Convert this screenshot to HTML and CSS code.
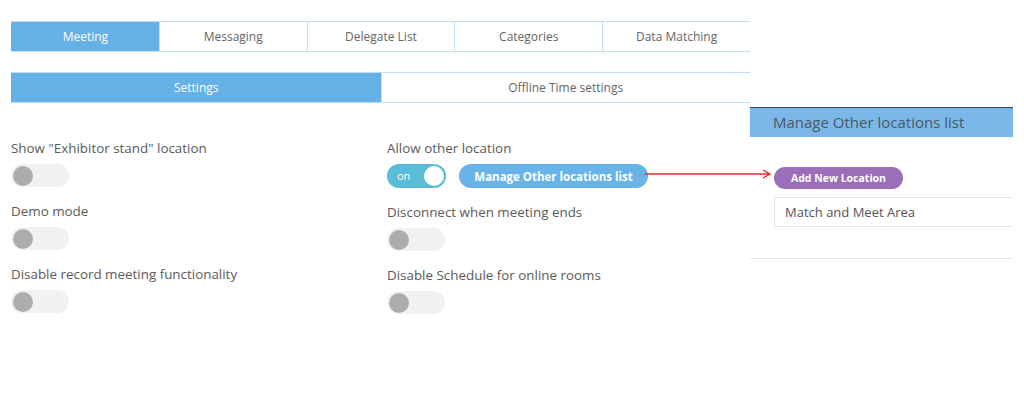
FILE: index.html
```html
<!DOCTYPE html>
<html lang="en">
<head>
  <meta charset="UTF-8" />
  <title>Meeting settings</title>
  <link rel="stylesheet" href="styles.css">
</head>
<body>
  <div class="page">
    <div class="main">
      <div class="tabs">
        <div class="tab active">Meeting</div>
        <div class="tab">Messaging</div>
        <div class="tab">Delegate List</div>
        <div class="tab">Categories</div>
        <div class="tab">Data Matching</div>
      </div>
      <div class="tabs subtabs">
        <div class="tab active">Settings</div>
        <div class="tab">Offline Time settings</div>
      </div>

      <div class="settings">
        <div class="col">
          <div class="item">
            <div class="label">Show "Exhibitor stand" location</div>
            <div class="switch"><span class="knob"></span></div>
          </div>
          <div class="item">
            <div class="label">Demo mode</div>
            <div class="switch"><span class="knob"></span></div>
          </div>
          <div class="item">
            <div class="label">Disable record meeting functionality</div>
            <div class="switch"><span class="knob"></span></div>
          </div>
        </div>
        <div class="col">
          <div class="item">
            <div class="label">Allow other location</div>
            <div class="row">
              <div class="switch on"><span class="txt">on</span><span class="knob"></span></div>
              <button class="btn-manage">Manage Other locations list</button>
            </div>
          </div>
          <div class="item">
            <div class="label">Disconnect when meeting ends</div>
            <div class="switch"><span class="knob"></span></div>
          </div>
          <div class="item">
            <div class="label">Disable Schedule for online rooms</div>
            <div class="switch"><span class="knob"></span></div>
          </div>
        </div>
      </div>
    </div>

    <div class="panel">
      <div class="panel-head">Manage Other locations list</div>
      <div class="panel-body">
        <button class="btn-add">Add New Location</button>
        <div class="loc-input">Match and Meet Area</div>
      </div>
    </div>

    <svg class="arrow" width="128" height="12" viewBox="0 0 128 12">
      <line x1="0" y1="6" x2="124" y2="6" stroke="#e8272b" stroke-width="1.3" />
      <path d="M118 2 L125 6 L118 10" fill="none" stroke="#e8272b" stroke-width="1.4" />
    </svg>
  </div>
</body>
</html>
```

FILE: styles.css
```css
body { margin: 0; background: #fff; font-family: "Open Sans", Arial, sans-serif; color: #555; }
.page { position: relative; display: flex; align-items: flex-start; height: 397px; }
.main { width: 739px; flex-shrink: 0; padding: 21px 0 0 11px; }

.tabs { display: flex; border-top: 1px solid #c7ddf3; border-bottom: 1px solid #c7ddf3; }
.tab {
  flex: 1;
  height: 29px;
  line-height: 29px;
  text-align: center;
  font-size: 12px;
  color: #666;
  border-left: 1px solid #c7ddf3;
}
.tab:first-child { border-left: 1px solid #66b0e8; }
.tab.active { background: #66b0e8; color: #fff; }
.subtabs { margin-top: 20px; }

.settings { display: flex; margin-top: 36px; }
.col { width: 376px; flex-shrink: 0; }
.col + .col { width: 363px; }
.item { margin-bottom: 15px; }
.label { font-size: 13.4px; line-height: 18px; margin-bottom: 7px; color: #5a5a5a; }
.row { display: flex; align-items: center; gap: 13px; }

.switch {
  position: relative;
  width: 58px;
  height: 23px;
  border-radius: 12px;
  background: #f1f1f1;
}
.switch .knob {
  position: absolute;
  left: 2px;
  top: 1.5px;
  width: 20px;
  height: 20px;
  border-radius: 50%;
  background: #adadad;
}
.switch.on { width: 59px; height: 24px; background: #5bbcd8; }
.switch.on .knob { left: auto; right: 2px; top: 2px; background: #fff; }
.switch .txt { position: absolute; left: 10px; top: 0; line-height: 23px; font-size: 11px; color: #fff; }

.btn-manage {
  height: 24px;
  width: 189px;
  border: none;
  border-radius: 12px;
  background: #68b3e8;
  color: #fff;
  font-family: "Open Sans", Arial, sans-serif;
  font-weight: 700;
  font-size: 11.5px;
  padding: 0;
}

.panel { width: 263px; margin-top: 107px; border-bottom: 1px solid #e6e6e6; }
.panel-head {
  height: 29px;
  line-height: 29px;
  border-top: 1px solid #3b4450;
  background: #7bb8e9;
  color: #4b5865;
  font-size: 15px;
  padding-left: 23px;
}
.panel-body { padding: 30px 0 31px 24px; }
.btn-add {
  display: block;
  width: 129px;
  height: 22px;
  border: none;
  border-radius: 11px;
  background: #9a6eb8;
  color: #fff;
  font-family: "Open Sans", Arial, sans-serif;
  font-weight: 700;
  font-size: 10.5px;
  padding: 0;
}
.loc-input {
  margin-top: 8px;
  height: 28px;
  line-height: 28px;
  border: 1px solid #e6e6e6;
  border-right: none;
  padding-left: 10px;
  font-size: 13px;
  color: #555;
}

.arrow { position: absolute; left: 645px; top: 168px; }
```
